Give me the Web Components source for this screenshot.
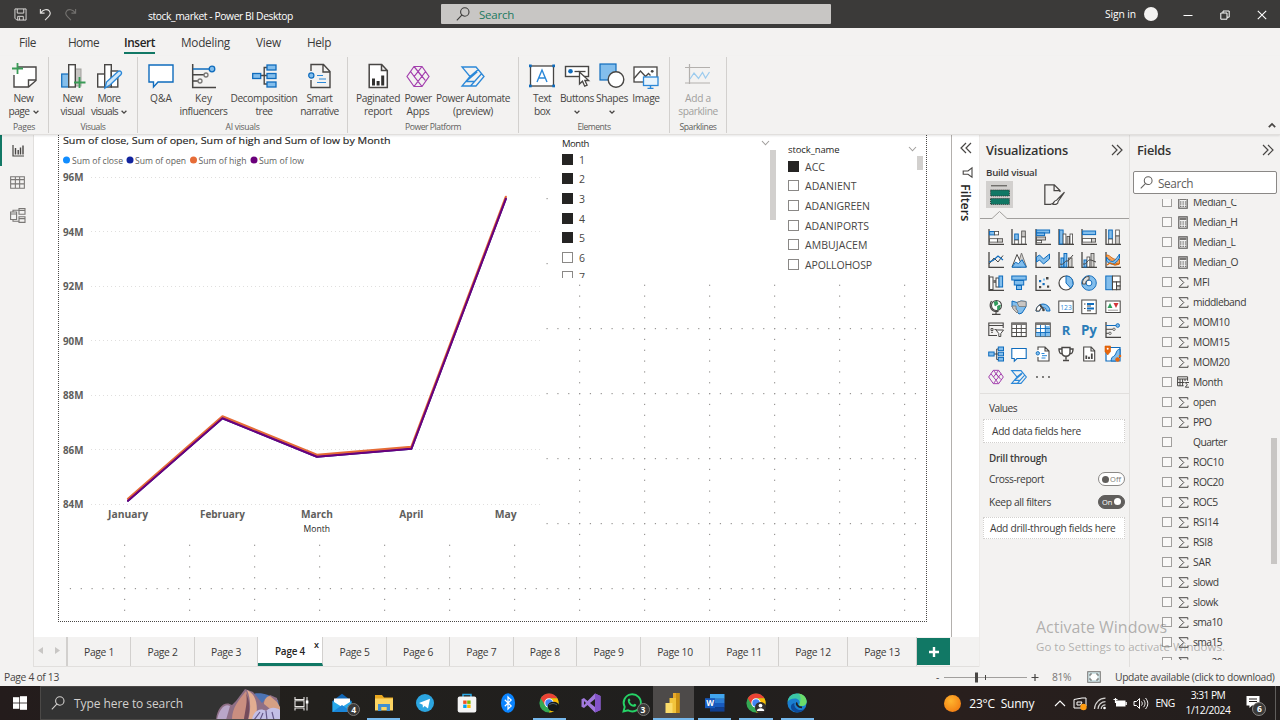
<!DOCTYPE html>
<html lang="en">
<head>
<meta charset="utf-8">
<title>stock_market - Power BI Desktop</title>
<style>
html,body{margin:0;width:1280px;height:720px;overflow:hidden;background:#f3f2f1}
body{font-family:"Open Sans","Noto Sans",sans-serif;color:#3b3a39}
</style>
</head>
<body>
<pbi-app></pbi-app>
<script>
const K='#484644', B='#2b88d8', L='#83beec', G='#a19f9d', D='#0f6cbd';
const s=(d,c=K,w=1.4,f='none')=>`<path d="${d}" stroke="${c}" stroke-width="${w}" fill="${f}"/>`;
const r=(x,y,w,h,f,c='none',sw=1)=>`<rect x="${x}" y="${y}" width="${w}" height="${h}" fill="${f}" stroke="${c}" stroke-width="${sw}"/>`;
const c=(x,y,q,f,st='none',w=1)=>`<circle cx="${x}" cy="${y}" r="${q}" fill="${f}" stroke="${st}" stroke-width="${w}"/>`;
const axis=s('M1 0V15.3H16',K,1.3);
const lozenge='M8 1.5h8l7 10-7 10H8L1 11.5z M8 1.5l11.3 13.8 M16 1.5L12 6.7 M12 6.7l3.8 4.8L12 16.300 8.200 11.5z M15.800 11.5l3.700-4.800 M12 16.300l-4 5.200 M12 16.300l4 5.200 M8.200 11.5L4.600 6.700';
const powerApps=s(lozenge,'#a33fae',1.2);
const powerAuto=s('M1 2h14l8 9.500-8 9.500H1l8-9.500z M9 11.5l8.200-7 M5 16.500L13.500 9.200l2.800-2.500 M9.500 21l11-12.200 M5 16.500h8.500','#2b88d8',1.3);
const chromeArt=`<circle cx="10" cy="10" r="9.6" fill="#34a853"/><path d="M10 .4A9.6 9.6 0 0 1 18.4 5.3L10 5.3 6 12.3 1.7 5.2A9.6 9.6 0 0 1 10 .4z" fill="#ea4335"/><path d="M18.4 5.3A9.6 9.6 0 0 1 10 19.6L14 12.4 12 5.3z" fill="#fbbc05"/><circle cx="10" cy="10" r="4.7" fill="#fff"/><circle cx="10" cy="10" r="3.7" fill="#4285f4"/>`;
const ICONS={
 save:[14,14,s('M1 1h12v12H3l-2-2z M3.5 1v4.5h7V1 M4 13V9h6v4 M6 10v3','#e1dfdd',1)],
 undo:[14,14,s('M1.5 1v4.5H6 M1.8 5.2C4.5 1.6 9 .8 11 3.2s1 4.6-1 6.3L6.5 13','#e1dfdd',1.2)],
 redo:[14,14,s('M12.5 1v4.5H8 M12.2 5.2C9.5 1.6 5 .8 3 3.2s-1 4.6 1 6.3L7.5 13','#72706e',1.2)],
 search:[14,14,c(8.8,5,4.2,'none','currentColor',1.1)+s('M5.8 8.2L.8 13.3','currentColor',1.1)],
 min:[10,10,s('M.5 5.5h9','#fff',1)],
 restore:[10,10,s('M.8 3h6.2v6.2H.8z M3 3V1h6.2v6.2H7','#fff',1)],
 close:[10,10,s('M.8.8l8.4 8.4M9.2.8L.8 9.2','#fff',1.1)],
 chev:[6,4,s('M.6.8L3 3.2 5.4.8',K,1.3)],
 chevup:[8,5,s('M.8 4.2L4 1l3.2 3.2',K,1.7)],
 chevg:[8,6,s('M.5 1L4 4.8 7.5 1',G,1.1)],
 dbl:[12,12,s('M1 1l5 5-5 5M6 1l5 5-5 5',K,1.2)],
 dbll:[12,12,s('M6 1L1 6l5 5M11 1L6 6l5 5',K,1.2)],
 newpage:[26,26,s('M7 4h18v13.5L17.5 24H3V12',K,1.4,'#fff')+s('M25 17h-7.5v7',K,1.4)+s('M6.5 0v11M1 5.5h11','#3a9b57',1.8)],
 newvisual:[26,26,r(15,6,6,17,'#c8c6c4',G)+r(1.7,11,7,13,L,D,1.2)+r(8.7,1.7,6.6,22.3,'#fff',K,1.4)+s('M19.5 14v11M14 19.5h11.5','#3a9b57',1.8)],
 morevisual:[26,26,r(1.7,11,7,13,'#fff',K,1.4)+r(8.7,1.7,6.6,22.3,'#fff',K,1.4)+r(15.3,8,6.5,16,'#fff',K,1.4)+s('M9 25l1.5-6L22 8.5c2.5-1.6 4.6 1 3 3L14 22z',B,1.4,'#cfe6f8')],
 qa:[26,26,s('M1 2h24v17H10L5.5 24v-5H1z',D,1.4,'#fff')],
 key:[26,26,s('M1.7 1v23.5H25',K,1.5)+s('M2 6h17',D,1.5)+s('M2 11.8h12M2 18h6',K,1.4)+c(21,6,2.8,L,D,1.3)+c(15,12,2,'#f3f2f1','#797775',1.3)+c(9,18,2,'#f3f2f1','#797775',1.3)],
 decomp:[26,26,s('M9 12.5h7M16 4.5h-2.8v16.5H16',K,1.4)+r(1.7,10.5,8,5,L,D,1.3)+r(16,2,9,5,L,D,1.3)+r(16,10.5,9,5,L,D,1.3)+r(16,19,9,5,L,D,1.3)],
 smart:[26,26,s('M4 8V1.5h12.5l6.5 7V24.5H4V17 M16 1.5v7.5h7',K,1.4)+c(4.3,12.5,2.6,L,D,1.2)+s('M10 12.5h6M12 16h7M10 19.5h9',B,1.2)],
 report:[26,26,s('M4.2 1.5h12.5l5.6 6V24.5H4.2z M16.5 1.5v6h6',K,1.5,'#fff')+r(7,15.5,3,7,'#323130')+r(11.6,18,3,4.5,'#323130')+r(16.2,12.5,3,10,'#323130')],
 apps:[24,23,powerApps], automate:[24,23,powerAuto],
 textbox:[26,26,r(1.5,3,23,20,'#fff',K,1.3)+s('M8 19L13 7l5 12M10 15h6',B,1.4)+[[0,1.5],[23.3,1.5],[0,21.6],[23.3,21.6]].map(p=>r(p[0],p[1],2.7,2.7,D)).join('')],
 buttons:[26,26,r(1.5,3.5,23,10,'#fff',K,1.4)+c(6.5,8.3,2.3,D)+s('M10.5 8.5h11',K,1.3)+s('M15.5 9v12l3-2.8 2.2 5 2.4-1-2.2-4.7h3.8z',K,1.3,'#fff')],
 shapes:[26,26,r(1,1,16,16,L,D,1.2)+c(17,16.5,7.8,'#fff',K,1.4)],
 image:[26,26,r(1,4,23,15,'#fff',K,1.3)+s('M1 15.5L7.5 8l5 5.5 3-3 2 2',K,1.3)+c(19.2,8.3,1.4,K)+r(10.5,14,14.5,8.5,'#e8f4fd',B,1.3)+s('M17.5 22.5v2.5M14.5 25.4h6',B,1.4)],
 spark:[26,26,s('M4.5 1v20M0 4.5h25M0 20h25','#b3b0ad',1.2)+s('M5 16l4-6 4.5 5.5 4-6 3 5.5 4-6','#9ccbee',1.2)],
 railchart:[12,12,s('M1 0v11h11',K,1.2)+s('M3.5 3v6.5M6.2 5v4.5M8.5 2.5v7M11 .5v9',K,1.4)],
 railtable:[14,12,s('M.6.6h12.8v10.8H.6z M.6 3.3h12.8M.6 7.3h12.8M5 .6v10.8M9 .6v10.8','#797775',1)],
 railmodel:[16,15,s('M.6 4h6v7.5h-6z M.6 6h6 M9 .6h6v5.7H9z M9 2.5h6 M9 8.7h6v5.7H9z M9 10.6h6 M3 4V2.3h5.5 M3 11.5v1.8h5.5','#797775',1.1)],
 funnel:[11,11,s('M10 .8v9.4L6 7.2H1.2V4H6z',K,1.1)],
 build:[20,20,s('M1 .8h16',K,1)+`<rect x=".6" y="5" width="18.8" height="6" fill="#117865" stroke="#333" stroke-dasharray="1 1"/><rect x=".6" y="13.4" width="18.8" height="6" fill="#117865" stroke="#333" stroke-dasharray="1 1"/>`],
 format:[20,20,s('M7 19.3H.8V.8h9l5.4 5.4v1.5 M9.6.8v5.6h5.6',K,1.2)+s('M19.5 7.8L12 15.5c-3 .3-2 2.5-4.2 3.4 3 1.2 5.8.2 5.6-2.2z',K,1.1,'#fff')],
 sigma:[11,11,s('M9.8 2.6V.7H1L5.8 5.5 1 10.3h9V8.500',K,1)],
 calc:[10,13,r(.8,.8,8.4,11.4,'#fff','#605e5c',1.2)+r(1.5,1.5,7,2.6,'#797775')+s('M2 6h1.5M4.4 6h1.5M6.8 6h1.5M2 8h1.5M4.4 8h1.5M6.8 8h1.5M2 10.2h1.5M4.4 10.2h1.5M6.8 10.2h1.5',K,1.1)],
 calsum:[13,12,s('M.6.8h10v4M.6.8v9h6M.6 3h10M3 3v7M5.6 3v7M8 3v2M.6 6.5h7',K,1)+s('M12 6.5H8.3l2 2.3-2 2.4H12',K,1)],
 none:[1,1,''],
 fit:[14,12,r(.7,.7,12.6,10.6,'#cfe3e6','#797775',1)+r(3.5,3,7,6,'#fff')+s('M3 5V3h2M9 3h2v2M11 7v2H9M5 9H3V7','#605e5c',.9)],
 // visual gallery
 v0:[16,16,axis+r(1.6,2.5,5,3.4,L,D)+r(6.6,2.5,4,3.4,'#fff',K,.8)+r(1.6,9.7,8,3.4,'#fff',K,.8)+r(9.6,9.7,5,3.4,'#d2d0ce',K,.8)],
 v1:[16,16,axis+r(3.7,5,3.6,6,L,D)+r(3.7,11,3.6,4,'#fff',K,.8)+r(10.7,2,3.6,6,'#c8c6c4',K,.8)+r(10.7,8,3.6,7,'#fff',K,.8)],
 v2:[16,16,axis+r(1.6,1,13,3,L,D)+r(1.6,4,8,2.6,L,D)+r(1.6,8,9,3,'#d2d0ce',K,.8)+r(1.6,11.4,5,2.4,'#fff',K,.8)],
 v3:[16,16,axis+r(1.6,1,3.5,14,L,D)+r(5.1,5,2.8,10,'#fff',K,.8)+r(9,7.5,2.6,7.5,'#c8c6c4',K,.8)+r(12,5,2.6,10,'#fff',K,.8)],
 v4:[16,16,axis+r(1.6,2,13,3.6,L,D)+r(1.6,9.5,9,3.6,'#fff',K,.8)+r(10.6,9.5,4,3.6,'#d2d0ce',K,.8)],
 v5:[16,16,axis+r(3.7,1,3.6,9,L,D)+r(3.7,10,3.6,5,'#fff',K,.8)+r(10.7,1,3.6,6,'#fff',K,.8)+r(10.7,7,3.6,8,'#d2d0ce',K,.8)],
 v6:[16,16,axis+s('M1 12l5-6 4 4 5-6.5',K,1)+s('M1 10l4-1.5 5-4.5 5 4',D,1.2)],
 v7:[16,16,s('M6 15L10.5 1 15.5 15z','#797775',1,'#d2d0ce')+s('M1 15L6 2.5 10 11v4z',K,1,'#fff')+s('M1 15.2l3.5-5 3 1.5 3.5-4 4.3 7.5z',D,1,L)],
 v8:[16,16,axis+s('M1.5 5l3-2 4 4 6-5v5l-6 5-4-4-3 2z',D,1,L)],
 v9:[16,16,axis+r(3,6,2.8,9,L,D)+r(6,1.5,2.8,13.5,L,D)+r(10.5,6,3.5,9,'#d2d0ce',K,.8)+s('M2 12c4 2 4-4 8-3l5-6',K,1)],
 v10:[16,16,axis+r(3,8,2.8,7,L,D)+r(6,5,2.8,10,'#fff',K,.8)+r(10,1.5,3,13.5,'#d2d0ce',K,.8)+s('M2 12c4 1 4-5 8-4l5 2',K,1)],
 v11:[16,16,axis+s('M1.5 3c5 0 5 6 13 4v5c-7 0-7-5-13-5z','#d06a14',1,'#f4a460')+s('M1.5 5c4 6 7 7 13-3v4c-5 8-9 7-13 3z',D,1,L)+s('M2 13l3-2 5 2 4-1','#d06a14',1.4)],
 v12:[16,16,axis+r(1.6,2,3.4,12.5,'#fff',K,1)+r(5,5,3,3,'#797775')+r(8,3,3,9,'#fff',K,1)+r(11,1,3.6,11,L,D)],
 v13:[16,16,r(.8,1,14.4,4,L,D)+r(3.3,5.5,9.4,4.5,L,D)+r(5.5,10.5,5,4,L,D)],
 v14:[16,16,axis+r(11,2,2.5,2.5,K)+r(4,5,2.2,2.2,D)+r(7.5,8,2.2,2.2,D)+r(4,11,2.2,2.2,K)+r(12,10.5,2.2,2.2,K)+r(8,3.5,2,2,'#83beec')],
 v15:[16,16,c(8,8,7,'#fff',K,1.2)+s('M8 8V1a7 7 0 0 1 4.8 12.2z',D,1,L)],
 v16:[16,16,c(8,8,5,'none',L,4.2)+c(8,8,7.3,'none',D,1)+c(8,8,2.9,'#fff',D,1)+s('M8 1.3A6.7 6.7 0 0 0 1.5 9h3.2A3.4 3.4 0 0 1 8 4.8z',K,.9,'#e1dfdd')],
 v17:[16,16,r(.8,1,6.5,13.7,L,D)+r(7.5,1,7.7,6,'#fff',K)+r(7.5,7,4,7.7,'#fff',K)+r(11.5,7,3.7,4,'#fff',K)+r(11.5,11,3.7,3.7,'#d2d0ce',K)],
 v18:[16,16,c(8.5,6.5,5,'#fff',K,1.1)+s('M6 3l3-1 1 3-3 2zM9.5 7l3-1-1 4-2 1z','#107c41',.5,'#2f9e5b')+s('M3.5 2C0 8 4 13.5 10.5 12.5M8 13v2M4 15.3h8.5',K,1.2)],
 v19:[16,16,s('M1 2l5 1.5L10 2l5 .5v5l-2 3.500-2 3-3 1-3-3.500v-2L1 8z',D,1,L)+s('M6 3.5L10 2l5 .5v5H8zM1 7h4v3l2 2-1 2-4-4z','#797775',.8,'#c8c6c4')],
 v20:[16,16,s('M1 12a7 7 0 0 1 14 0h-3.5a3.5 3.5 0 0 0-7 0z',D,1,L)+s('M1 12a7 7 0 0 1 3.500-6l2 3a3.500 3.500 0 0 0-2 3z',K,1,'#fff')+s('M5 5.500l3.500 5',K,1.4)+c(8.5,11,1.3,K)],
 v21:[16,16,r(.8,2,14.4,11.5,'#fff',K,1)+'<text x="2.200" y="10.800" font-size="8" fill="#2b88d8" textLength="11.600" lengthAdjust="spacingAndGlyphs">123</text>'],
 v22:[16,16,r(.8,1,14.4,13.7,'#fff',K,1)+s('M6 5h7M6 9.5h7',D,1.8)+s('M3 5h1.5M3 9.5h1.5M6 7h4M6 11.8h4',K,1)],
 v23:[16,16,r(.8,2,14.4,11.5,'#fff',K,1)+s('M2.5 9L5 4l2.4 5z','none',0,'#2f9e5b')+s('M8.5 4h5L11 9z','none',0,'#d13438')+s('M3 11.200h10',G,1)],
 v24:[16,16,s('M9 13.5H.8V1h14.4v5M.8 3.5h14.4',K,1.1)+s('M3 6.5h2v2H3zM3 10.3h2M6.5 7.5h2',K,.9)+s('M8 8h7.5l-2.7 3.5v3h-2v-3z',K,1,'#fff')],
 v25:[16,16,r(.8,1,14.4,13.5,'#fff',K,1.1)+r(1,1,14,2,'#797775')+s('M1 6.5h14M1 10.5h14M5.5 3v11.5M10.3 3v11.5',K,.9)],
 v26:[16,16,r(.8,1,14.4,13.5,'#fff',K,1.1)+r(10,4,5,10.4,L)+r(1,10,9,4.4,L)+r(1,1,14,2,'#797775')+s('M1 6.5h14M1 10.5h14M5.5 3v11.5M10.3 3v11.5',D,.9)],
 v27:[16,16,'<text x="8" y="13" font-size="13" font-weight="700" fill="#2b7cb8" text-anchor="middle">R</text>'],
 v28:[16,16,'<text x="0" y="12.500" font-size="13.500" font-weight="700" fill="#2b7cb8" textLength="16">Py</text>'],
 v29:[16,16,s('M1 0V15.3H16',K,1.3)+s('M1 3.5h10',D,1)+s('M1 7.3h7M1 11.3h3',K,1)+c(12.7,3.5,1.8,L,D,1)+c(9,7.3,1.2,'#fff',K,.8)+c(5,11.3,1.2,'#fff',K,.8)],
 v30:[16,16,s('M6 8h4M10.5 3H8.7v10.5h2',K,1)+r(.7,6,5.4,4,L,D)+r(10.3,1,5.2,3.6,L,D)+r(10.3,6.2,5.2,3.6,L,D)+r(10.3,11.4,5.2,3.6,L,D)],
 v31:[16,16,s('M.8 2.5h14.4v10H6l-2.7 2.7v-2.7H.8z',D,1.1,'#fff')],
 v32:[16,16,s('M3 4V1h7l4 4v10H3v-4M10 1v4h4',K,1.1,'#fff')+c(2.8,7.3,1.7,L,D,.9)+s('M6.5 7.5h3M7 9.7h5M6.5 12h4',B,1)],
 v33:[16,16,s('M4 1.5h8v5c0 5-8 5-8 0z M4 3H1c0 4 1 5 3.5 5M12 3h3c0 4-1 5-3.5 5M8 10.5v3M5 14.5h6',K,1.4,'#fff')],
 v34:[16,16,s('M2.7 1h7.5l3.5 3.6V15H2.7z M10 1v4h3.5',K,1.1,'#fff')+s('M5.3 9.5V13M8 10.8V13M10.8 7.5V13',K,1.8)],
 v35:[16,16,s('M1 1.5h14V15H1z',D,1.2,'#fff')+s('M6 15c1-6 2-3 4-6s1-5 5-6v8l-4 4z',D,1,L)+s('M0 0h5.500v5.500L2.700 9 0 5.500z','#d35b00',.6,'#e8660c')+c(2.700,2.800,1,'#fff')+c(12.5,13.500,2.2,'#e8660c')+c(15,10,1.3,'#e8660c')],
 v36:[24,23,s(lozenge,'#a33fae',1.5)],v37:[24,23,powerAuto.replace('1.3"','1.7"')],
 v38:[16,16,c(2,8,.9,K)+c(8,8,.9,K)+c(14,8,.9,K)],
 // taskbar
 win:[14,14,r(0,1.2,6.3,5.4,'#fff')+r(7,.2,7,6.4,'#fff')+r(0,7.4,6.3,5.4,'#fff')+r(7,7.4,7,6.4,'#fff')],
 task:[15,15,s('M1 1v2.5h9V1M1 14.5V12h9v2.5M1 4.8h9v5.7H1zM13 1v13.5','#e8e6e4',1.1)+r(11.8,4.5,2.6,3,'#fff')],
 mail:[20,20,s('M.5 8L10 .8 19.5 8v11H.5z','none',0,'#1066b5')+s('M2 5.5h16v7L10 16 2 12z','none',0,'#fff')+s('M.5 8l9.5 6L19.5 8v11H.5z','none',0,'#29a9ea')+s('M.5 19L10 12l9.5 7z','none',0,'#1a86d9')],
 explorer:[20,20,s('M1 2h7l2 2.5h9V17H1z','none',0,'#e9a820')+r(1,5.5,18,12,'#fcd462')+s('M4 18v-7h12v7h-3.3v-4H7.3v4z','none',0,'#3f8fd2')],
 telegram:[20,20,c(10,10,9,'#2ca5e0')+s('M4 10l11-4.3-2 9.8-3.3-2.4-1.8 1.7-.2-3z','none',0,'#fff')],
 store:[20,20,s('M6 4V1.5h8V4','#2aa9e8',1.5)+`<rect x=".7" y="3.5" width="18.6" height="16" rx="2" fill="#f4f4f4"/>`+r(6.2,7.5,3.4,3.4,'#f25022')+r(10.2,7.5,3.4,3.4,'#7fba00')+r(6.2,11.6,3.4,3.4,'#00a4ef')+r(10.2,11.6,3.4,3.4,'#ffb900')],
 bt:[20,20,'<ellipse cx="10" cy="10" rx="7" ry="9.8" fill="#0a84ff"/>'+s('M6.8 6.8l6.4 6.2-3.2 3V4l3.2 3-6.4 6.2','#fff',1.2)],
 chromeA:[20,20,chromeArt+'<ellipse cx="14.5" cy="13.5" rx="5.8" ry="4.8" fill="#15191b"/>'+s('M10 12c3-2 5-2 8 0','#53636a',1)],
 chromeB:[20,20,chromeArt+c(14.5,14.5,5.5,'#34302f')+c(14.5,12.6,1.9,'#fff')+s('M10.8 18c0-3.8 7.4-3.8 7.4 0z','none',0,'#fff')],
 vs:[20,20,s('M14 .5l5.5 2.5v14L14 19.5 6.5 12 3 15 .5 13.8V6.2L3 5l3.5 3z M14 6l-5 4 5 4z M3 8v4l2-2z','none',0,'#a179dc').replace('/>',' fill-rule="evenodd"/>')+s('M14 .5l5.5 2.5v14L14 19.5z','none',0,'#8252c7')],
 wa:[20,20,s('M1.5 18.5l1.2-4.6A8.6 8.6 0 1 1 6 17.3z','#25d366',1.9)+s('M6 6.3c1-1.5 1.8-1 2.4 1l-.8 1.3c.8 1.6 1.8 2.6 3.6 3.2l1.2-1c2.4.7 2.4 1.5 1 2.7C9.500 15.300 4.800 10 6 6.300z','none',0,'#25d366')],
 pbi:[20,20,r(10,0,6.5,20,'#e8a92b')+r(6.5,5,6.5,15,'#f2c43b')+r(2.5,10,7,10,'#fbdc6a')+s('M13 5h0v15h3.500V0H13z','none',0,'#c98f14')],
 word:[20,20,r(5,1,14.5,4.8,'#41a5ee')+r(5,5.700,14.5,4.500,'#2b7cd3')+r(5,10,14.5,4.500,'#185abd')+r(5,14.300,14.5,4.300,'#103f91')+r(0,5.2,10,10,'#185abd')+'<text x="5" y="13.200" font-size="8" font-weight="700" fill="#fff" text-anchor="middle">W</text>'],
 edge:[20,20,c(10,10,9.6,'#1b7fd0')+s('M.5 9C1 3.500 5 .4 10 .4c6 0 9.600 4 9.600 8.100 0 3-2.500 4.600-5 4.600-2 0-3-.8-2-2C13.500 8 11 5.600 8 5.600 4.500 5.600 1.500 7 .5 9z','none',0,'#3cc7a5')+s('M11 .5c5 .3 8.500 4 8.600 8 0 3-2.500 4.600-5 4.600-2 0-3-.8-2-2C13.500 8 15 3 11 .5z','none',0,'#6bdc6a')+s('M7.500 10c-1 4 2.500 7.500 7 7 1.500-.2 2.500-.8 3.500-1.500-3 4-8 5-12 2.500-3-2.500-3-7 1.500-8z','none',0,'#0c4a9a')+s('M10 9.500c-1 1.500.5 4.800 5 4.800','#20201f',1.800)],
 chevtray:[12,8,s('M1 7l5-5 5 5','#fff',1.1)],
 onedr:[14,14,s('M1 3.500l8-1.500h4v8M1 3.500v8.500h8M4 6h5l-1.500 3H4z','#fff',1)+c(10.500,11,3.200,'#ff9c12')],
 wifi:[14,13,s('M1.500 12A11 11 0 0 1 12.500 1.200M5 12a7.500 7.500 0 0 1 7.500-7.400M8.200 12a4.300 4.300 0 0 1 4.300-4.200','#d2d0ce',1.200)+c(11.500,11,1.300,'#fff')],
 batt:[14,10,r(3,2.500,9.500,6,'#fff')+r(12.500,4,1.300,3,'#fff')+s('M.5 1.500h4M2.500 0v5','#fff',1.200)],
 vol:[15,13,s('M1 4.500h2.500L6.500 1.500v10L3.500 8.500H1z M8.500 4.500c1 1.300 1 2.700 0 4M10.500 2.800c2 2.300 2 5.100 0 7.400M12.500 1c3 3.500 3 7.500 0 11','#fff',1)],
 note:[14,14,s('M.5 1h13v9.500H6L3.500 13v-2.500h-3z','none',0,'#fff')+s('M3 4h8M3 6.500h8','#221e1d',1)]
};
function define(tag,css,html,after){
 customElements.define(tag,class extends HTMLElement{
  connectedCallback(){
   if(this.shadowRoot)return;
   const root=this.attachShadow({mode:'open'});
   root.innerHTML='<style>*{box-sizing:border-box}'+css+'</style>'+(typeof html==='function'?html(this):html);
   if(after)after(this,root);
  }
 });
}
const ic=(n,w,h,x='')=>`<pbi-icon name="${n}" w="${w}" h="${h||w}" ${x}></pbi-icon>`;
const t=(txt,w,x='')=>`<fit-text w="${w}" ${x}>${txt}</fit-text>`;

define('pbi-icon',':host{display:inline-block;flex:none;line-height:0}svg{display:block;overflow:visible;font-family:"Open Sans",sans-serif}',e=>{
 const i=ICONS[e.getAttribute('name')];
 return `<svg width="${e.getAttribute('w')}" height="${e.getAttribute('h')}" viewBox="0 0 ${i[0]} ${i[1]}">${i[2]}</svg>`;
});
// One-line label whose tracking is tuned so that it occupies a given width.
define('fit-text',':host{display:inline-block;flex:none;white-space:pre}','<slot></slot>',e=>{
 const w=+e.getAttribute('w'), range=document.createRange();
 range.selectNodeContents(e);
 const n=range.getBoundingClientRect().width, len=e.textContent.length;
 if(w&&n){const sp=(w-n)/len;e.style.letterSpacing=sp.toFixed(3)+'px';e.style.width=w+'px';}
});

define('title-bar',`:host{display:flex;align-items:center;height:28px;background:#3b3a39;color:#fff;font-size:10.3px}
.q{display:flex;gap:12px;width:148px;padding-left:14px;align-items:center}
.s{display:flex;align-items:center;height:20px;width:390px;margin-left:148px;background:#c8c6c4;border-radius:1px;padding-left:15px;gap:9px;color:#3b3a39;font-size:11.500px}
.s fit-text{color:#217a60}.ttl{padding-top:4px}
.r{display:flex;align-items:center;flex:1;padding-left:274px}.av{width:14px;height:14px;border-radius:50%;background:#f3f2f1;margin:0 26px 0 8px}
.w{display:flex;gap:27px;padding-top:2px;align-items:center;margin-left:-1px}`,
`<div class="q">${ic('save',13)}${ic('undo',13)}${ic('redo',13)}</div>${t('stock_market - Power BI Desktop',145,'class="ttl"')}
<div class="s">${ic('search',14)}${t('Search',35)}</div>
<div class="r">${t('Sign in',31)}<span class="av"></span><div class="w">${ic('min',10)}${ic('restore',10)}${ic('close',10)}</div></div>`);

define('ribbon-tabs',`:host{display:flex;height:28px;font-size:11.800px;background:#f3f2f1}
span{height:26px;line-height:28px;border-bottom:2px solid transparent}
.on{font-weight:600;color:#252423;border-color:#117865}`,
[['File',17,19],['Home',31,32],['Insert',31,25],['Modeling',49,26],['View',25,26],['Help',24,26]].map(a=>`<span class="${a[0]=='Insert'?'on':''}" style="margin-left:${a[2]}px">${t(a[0],a[1])}</span>`).join(''));

define('ribbon-button',`:host{display:flex;flex-direction:column;align-items:center;flex:none;font-size:10.200px;line-height:13px;color:#484644}
.i{height:28px;display:flex;align-items:center;margin-bottom:2px}.l{display:flex;align-items:center;gap:3px;height:13px}:host([off]) .l{color:#a19f9d}`,
e=>{e.style.width=e.getAttribute('cell')+'px';
 const l=(k,kw)=>e.getAttribute(k)?t(e.getAttribute(k),e.getAttribute(kw)):'';
 const n=e.getAttribute('icon'),sm=n=='apps'||n=='automate';
 return `<div class="i">${ic(n,sm?24:26,sm?23:26)}</div><div class="l">${l('a','aw')}</div><div class="l">${l('b','bw')}${e.hasAttribute('menu')?ic('chev',6,4):''}</div>`});

define('ribbon-group',`:host{display:flex;flex-direction:column;flex:none;height:76px;margin-top:1px;border-right:1px solid #d2d0ce;padding-top:5px}
.b{display:flex;height:59px}.n{text-align:center;font-size:8.600px;line-height:12px;height:12px;color:#605e5c;margin-top:0}`,
e=>{e.style.width=e.getAttribute('size')+'px';return `<div class="b" style="padding-left:${e.getAttribute('pad')}px"><slot></slot></div><div class="n">${t(e.getAttribute('label'),e.getAttribute('lw'))}</div>`});

const rb=(icon,cell,a,aw,b='',bw='',x='')=>`<ribbon-button icon="${icon}" cell="${cell}" a="${a}" aw="${aw}" b="${b}" bw="${bw}" ${x}></ribbon-button>`;
const rg=(size,pad,label,lw,body)=>`<ribbon-group size="${size}" pad="${pad}" label="${label}" lw="${lw}">${body}</ribbon-group>`;
define('ribbon-bar',`:host{display:flex;height:79px;background:#f3f2f1;border-bottom:1px solid #e1dfdd;position:relative;z-index:2;box-shadow:0 1px 2px rgba(0,0,0,.1)}.up{margin:67px 4px 0 auto}`,
rg(49,4,'Pages',22,rb('newpage',39,'New',20,'page',21,'menu'))+
rg(89,6,'Visuals',25,rb('newvisual',35,'New',20,'visual',24)+rb('morevisual',38,'More',23,'visuals',27,'menu'))+
rg(210,4,'AI visuals',34,rb('qa',38,'Q&amp;A',22)+rb('key',47,'Key',17,'influencers',48)+rb('decomp',74,'Decomposition',67,'tree',17)+rb('smart',37,'Smart',26,'narrative',38.5))+
rg(171,6,'Power Platform',56,rb('report',48,'Paginated',44,'report',28)+rb('apps',32,'Power',27,'Apps',23)+rb('automate',78,'Power Automate',74,'(preview)',40))+
rg(151,5,'Elements',33,rb('textbox',36,'Text',18,'box',16)+rb('buttons',34,'Buttons',34,'','','menu')+rb('shapes',36,'Shapes',32,'','','menu')+rb('image',32,'Image',27.5))+
rg(57,8,'Sparklines',37,rb('spark',40,'Add a',26,'sparkline',39.5,'off'))+ic('chevup',8,5,'class="up"'));

define('view-rail',`:host{display:flex;flex-direction:column;width:34px;height:532px;border-right:1px solid #e1dfdd;background:#f3f2f1}
div{height:33px;display:flex;align-items:center;justify-content:center;border-left:2px solid transparent}.on{border-color:#117865;height:31px}`,
`<div class="on">${ic('railchart',12)}</div><div>${ic('railtable',15,13)}</div><div>${ic('railmodel',16,15)}</div>`);

define('line-chart',`:host{display:block;width:487px;height:406px;background:#fff}svg{display:block;font-family:"Open Sans","Noto Sans",sans-serif}`,()=>{
 const T=(x,y,w,txt,a='',fs=10)=>`<text x="${x}" y="${y}" textLength="${w}" lengthAdjust="spacingAndGlyphs" font-size="${fs}" ${a}>${txt}</text>`;
 let o='<svg width="487" height="406" viewBox="59 135 487 406">';
 o+=T(63,144.200,327.500,'Sum of close, Sum of open, Sum of high and Sum of low by Month','fill="#252423" font-weight="500" stroke="#252423" stroke-width=".15"',9.800);
 [['close',66.500,72,51,'#118dff'],['open',130,135,51,'#12239e'],['high',193.500,198.500,48,'#e66c37'],['low',254,259,45,'#6b007b']].forEach(a=>o+=c(a[1],160,3.500,a[4])+T(a[2],164,a[3],'Sum of '+a[0],'fill="#605e5c"',9.500));
 for(let i=0;i<7;i++){const y=177.500+i*54.450;o+=`<path d="M91 ${Math.floor(y)+.5}H543" stroke="#e0dfde" stroke-width="1" stroke-dasharray="1 3"/>`+T(63,y+3.800,20.500,(96-2*i)+'M','font-weight="700" fill="#605e5c"',9.800);}
 [['January',40],['February',45],['March',32],['April',24],['May',22]].forEach((m,i)=>o+=T(128+i*94.450-m[1]/2,517.500,m[1],m[0],'font-weight="700" fill="#605e5c"',10));
 o+=T(303.500,532,26.500,'Month','fill="#252423"',9);
 const P=(d,k,col)=>`<polyline points="128,${500+k} 222.450,${417.500+k} 316.900,${456+k} 411.350,${448+k} 505.800,${198+k}" fill="none" stroke="${col}" stroke-width="${d}" stroke-linejoin="round" stroke-linecap="round"/>`;
 return o+P(2,.8,'#12239e')+P(2.200,-1.200,'#e66c37')+P(2,.8,'#6b007b')+'</svg>';
});

define('slicer-list',`:host{display:block;overflow:hidden;background:#fff;color:#484644;font-size:10.500px}
header{display:flex;justify-content:space-between;align-items:center;height:14px;color:#252423;font-size:9.500px;padding-right:6px}
.b{display:flex;justify-content:space-between}.row{display:flex;align-items:center;height:19.600px;gap:6px}
i{width:11px;height:11px;border:1px solid #8a8886;background:#fff;flex:none;margin-bottom:1px}i.on{background:#252423;border-color:#252423}
.bar{width:6px;background:#d2d0ce}`,
e=>{const d=JSON.parse(e.getAttribute('data'));return `<header>${t(d.title,d.tw)}${ic('chevg',9,6)}</header><div class="b"><div style="margin-top:${d.top}px">${d.rows.map((q,i)=>`<div class="row"><i class="${i<d.on?'on':''}"></i>${t(q[0],q[1])}</div>`).join('')}</div><div class="bar" style="height:${d.bh}px;margin-top:${d.bt}px"></div></div>`});

const sl=(cls,d)=>`<slicer-list class="${cls}" data='${JSON.stringify(d)}'></slicer-list>`;
define('report-canvas',`:host{display:block;width:917px;height:502px;background:#fff;padding-left:24px;overflow:hidden}
.page{position:relative;width:869px;height:487px;overflow:hidden;border:1px dotted #4a4847;border-width:0 1px 1px}
.grid{position:absolute;inset:0}.mask{position:absolute;left:491px;top:0;width:376px;height:146px;background:#fff}
line-chart{position:absolute;left:0;top:0}.m{position:absolute;left:503px;top:1px;width:214px;height:142px}.s{position:absolute;left:729px;top:7px;width:135px;height:136px}`,
`<div class="page"><svg class="grid" width="869" height="487"><defs><pattern id="g" width="65" height="65" patternUnits="userSpaceOnUse" x="0" y="-2">${[0,1,2,3,4,5].map(i=>r(0,+(i*10.833).toFixed(2),1.2,1.2,'#979593')+r(+(i*10.833).toFixed(2),0,1.2,1.2,'#979593')).join('')}</pattern></defs><rect x="10" width="848" height="480" fill="url(#g)"/></svg><div class="mask"></div><line-chart></line-chart>`+
sl('m',{title:'Month',tw:27,top:0,on:5,bh:70,bt:0,rows:[1,2,3,4,5,6,7].map(x=>[''+x,5.5])})+
sl('s',{title:'stock_name',tw:51.5,top:1,on:1,bh:14,bt:0,rows:[['ACC',20],['ADANIENT',51.5],['ADANIGREEN',65],['ADANIPORTS',64],['AMBUJACEM',62.5],['APOLLOHOSP',67]]})+'</div>');

define('filters-strip',`:host{display:flex;flex-direction:column;align-items:center;width:28px;height:502px;background:#fff;border-left:1px solid #b3b0ad;padding-top:7px}
fit-text{writing-mode:vertical-rl;font-weight:600;font-size:12.500px;height:36px;width:auto!important;margin-top:6px;color:#252423}.f{margin:13px 0 0 3px}`,
`${ic('dbll',12)}${ic('funnel',11,11,'class="f"')}<fit-text>Filters</fit-text>`);

define('toggle-pill',`:host{display:flex;align-items:center;justify-content:space-between;width:27px;height:14px;border-radius:7px;border:1px solid #8a8886;background:#fff;font-size:7.500px;color:#797775;padding:0 3px}
i{width:7px;height:7px;border-radius:50%;background:#605e5c}:host([on]){background:#605e5c;border-color:#605e5c;color:#fff;flex-direction:row-reverse}:host([on]) i{background:#fff}`,'<i></i><slot></slot>');

define('viz-pane',`:host{display:block;width:151px;height:532px;background:#f3f2f1;border-left:1px solid #edebe9;border-right:1px solid #e1dfdd;font-size:10.200px;overflow:hidden}
header{display:flex;justify-content:space-between;align-items:center;height:30px;padding:0 6px 0 6px;font-size:12.800px;font-weight:600;color:#323130}
.bv{display:block;font-size:9.700px;font-weight:600;margin:0 0 0 6px;height:15px;line-height:15px}
.tabs{display:flex;align-items:center;height:29px;padding-left:6px}.tabs div{width:27px;height:27px;background:#d2d0ce;display:flex;align-items:center;justify-content:center}.tabs pbi-icon.f{margin-left:31px}
.line{display:block;margin-top:1px}.g{display:grid;grid-template-columns:repeat(6,23.350px);grid-auto-rows:23.400px;margin:6px 0 0 4.300px;height:167px}
.g pbi-icon{place-self:center}.sep{border-top:1px solid #e1dfdd;margin-top:1px}
.r{display:flex;justify-content:space-between;align-items:center;padding:0 4px 0 9px}
.well{width:142px;margin-left:3px;background:#fff;border:1px dotted #d2d0ce;display:flex;align-items:center}`,
`<header>${t('Visualizations',82)}${ic('dbl',12)}</header><div class="bv">${t('Build visual',51)}</div><div class="tabs"><div>${ic('build',20)}</div>${ic('format',21,21,'class="f"')}</div>
<svg class="line" width="150" height="9"><path d="M0 8.500H12L19.500 1.500 27 8.500H150" fill="none" stroke="#a19f9d"/></svg>
<div class="g">${Array.from({length:39},(_,i)=>ic('v'+i,16)).join('')}</div><div class="sep"></div>
<div class="r" style="height:25px;padding-top:2px">${t('Values',28)}</div><div class="well" style="height:24px;padding-left:8px">${t('Add data fields here',89)}</div>
<div class="r" style="height:30px;font-weight:600;font-size:9.900px">${t('Drill through',58)}</div><div class="r" style="height:12px">${t('Cross-report',55)}<toggle-pill>Off</toggle-pill></div>
<div class="r" style="height:33px">${t('Keep all filters',62)}<toggle-pill on>On</toggle-pill></div><div class="well" style="height:22px;padding-left:6px;margin-top:-1px">${t('Add drill-through fields here',125.500)}</div>`);

define('fields-pane',`:host{display:block;width:150px;height:532px;background:#f3f2f1;font-size:10.300px;overflow:hidden}
header{display:flex;justify-content:space-between;align-items:center;height:30px;padding:0 6px 0 7px;font-size:12.800px;font-weight:600;color:#323130}
.s{display:flex;align-items:center;gap:5px;width:144px;height:23px;margin:6px 0 5px 3px;background:#fff;border:1px solid #8a8886;border-radius:2px;padding-left:6px;font-size:11.800px;color:#605e5c}
.list{height:461px;overflow:hidden;display:flex;justify-content:space-between}.rows{margin-top:-7px}.row{display:flex;align-items:center;height:20px;padding-left:32px}
i{width:10px;height:10px;border:1px solid #a19f9d;background:#faf9f8;flex:none}.k{width:21px;display:flex;justify-content:center;padding-left:1px}
.bar{width:6px;height:126px;margin:239px 3px 0 0;background:#c8c6c4}`,
`<header>${t('Fields',34)}${ic('dbl',12)}</header><div class="s">${ic('search',13)}${t('Search',35)}</div><div class="list"><div class="rows">${
[['Median_C',43.5,'calc'],['Median_H',44.5,'calc'],['Median_L',42.5,'calc'],['Median_O',45,'calc'],['MFI',16.5],['middleband',53],['MOM10',36.5],['MOM15',36.5],['MOM20',36.5],['Month',29.5,'calsum'],['open',23],['PPO',18.5],['Quarter',34,'none'],['ROC10',30.5],['ROC20',30.500],['ROC5',24.500],['RSI14',25.500],['RSI8',19.500],['SAR',18],['slowd',25.500],['slowk',25],['sma10',29],['sma15',29],['sma20',29]].map(f=>{const k=f[2]||'sigma';return `<div class="row"><i></i><span class="k">${ic(k,ICONS[k][0],ICONS[k][1])}</span>${t(f[0],f[1])}</div>`}).join('')}</div><div class="bar"></div></div>`);

define('page-tabs',`:host{display:flex;width:945px;height:30px;background:#f3f2f1;font-size:10.300px;border-bottom:1px solid #e1dfdd}
.nav{width:34px;display:flex;align-items:center;justify-content:space-between;padding:0 6px 2px 4px;border-right:2px solid #d2d0ce}
.p{display:flex;justify-content:center;align-items:center;border-right:1px solid #d2d0ce;position:relative}.on{background:#fff;border-bottom:3px solid #117865;color:#252423;font-weight:600;padding-top:2px;height:29px;font-size:9.900px}
.x{position:absolute;right:3px;top:1px;font-size:9px;line-height:14px}.add{width:33px;height:27px;margin:1px 0 0;background:#117865;display:flex;align-items:center;justify-content:center}`,
`<div class="nav"><svg width="5" height="7"><path d="M5 0v7L0 3.500z" fill="#c8c6c4"/></svg><svg width="5" height="7"><path d="M0 0v7l5-3.500z" fill="#c8c6c4"/></svg></div>`+
[63,64,63,65,64,63,63.500,63.500,64,69,69,69,69].map((w,i)=>`<div class="p ${i==3?'on':''}" style="width:${w}px">${t('Page '+(i+1),i>8?35.500:30)}${i==3?'<span class="x">x</span>':''}</div>`).join('')+
`<div class="add"><svg width="10" height="10"><path d="M5 0v10M0 5h10" stroke="#fff" stroke-width="2.400"/></svg></div>`);

define('status-bar',`:host{display:flex;align-items:center;height:19px;background:#f3f2f1;font-size:10.300px;padding-left:4px;color:#484644}
.z{display:flex;align-items:center;margin-left:877px}.f{margin:0 14px 0 16px}`,
`${t('Page 4 of 13',55)}<div class="z">${t('-',4)}<svg width="100" height="12"><path d="M4 6.500h83" stroke="#a19f9d"/><path d="M36.500 1.500v10" stroke="#484644" stroke-width="3"/><path d="M45.500 4v5" stroke="#484644"/><path d="M95 3v7M91.500 6.500h7" stroke="#484644" stroke-width="1.200"/></svg></div><span style="width:12px"></span>${t('81%',19,'style="color:#797775"')}${ic('fit',14,12,'class="f"')}${t('Update available (click to download)',159.500)}`);

define('task-icon',`:host{display:flex;flex:none;width:41.350px;height:34px;align-items:center;justify-content:center;position:relative}
:host([run])::after{content:"";position:absolute;left:4px;right:4px;bottom:0;height:2px;background:#76b9ed}:host([sel]){background:#4d4a49}:host([sel])::after{left:0!important;right:0!important}
b{position:absolute;right:3px;top:17px;width:13px;height:13px;border-radius:50%;background:#3b3a39;border:1px solid #797775;color:#fff;font-size:8.500px;line-height:11px;text-align:center}`,
e=>ic(e.getAttribute('name'),e.getAttribute('name')=='task'?15:20)+(e.hasAttribute('n')?`<b>${e.getAttribute('n')}</b>`:''));

define('task-bar',`:host{display:flex;height:34px;background:linear-gradient(90deg,#241c1c 0,#22201d 24%,#201f1e 55%,#291f1d 75%,#221e1d 100%);color:#fff;font-size:11px;align-items:center}
.w{width:40px;display:flex;justify-content:center}.s{width:240px;height:34px;background:#333;border:1px solid #4b4947;border-right:0;display:flex;align-items:center;padding-left:10px;gap:9px;font-size:12px;color:#d2d0ce;overflow:hidden}
.s .art{margin-left:auto;display:block}.icons{display:flex;width:537.300px;margin-left:1px}.wx{display:flex;align-items:center;margin-left:126px;gap:8px;font-size:12px}.sun{width:17px;height:17px;border-radius:50%;background:radial-gradient(circle at 40% 35%,#ffb52e,#ef6f0c)}
.tray{display:flex;align-items:center;margin-left:20px;gap:6.300px}.clock{display:flex;flex-direction:column;align-items:center;margin-left:11px;line-height:15px;font-size:10.300px}.n{position:relative;margin-left:16px}.n b{position:absolute;left:6px;top:7px;width:14px;height:14px;border-radius:50%;background:#3b3a39;border:1px solid #8a8886;font-size:8.500px;line-height:12px;text-align:center}.end{width:1px;height:34px;background:#605e5c;margin-left:15px}`,
`<div class="w">${ic('win',14)}</div><div class="s">${ic('search',14)}${t('Type here to search',109)}
<svg class="art" width="64" height="32" viewBox="216 687 64 32"><path d="M238 706c4-9 16-16 30-11l10 5 2 12h-42z" fill="#4d74b4"/><path d="M216 720c1-13 9-20 16-15l4-4 9-12 8 3 9 11 8-8 7 3 3 22z" fill="#8e6f86"/><path d="M217 720c2-11 8-17 13-14l-4 14z" fill="#b9a6c8"/><path d="M232 720c0-13 7-20 14-29 4 9 0 20-2 29z" fill="#c98e80"/><path d="M247 690c10 5 11 16 9 28l-8 2c3-9 3-21-1-30z" fill="#e3ad91"/><path d="M246 693c2 8-1 18-2 26h4c2-9 2-18-2-26z" fill="#744b5b"/><path d="M264 704c0-5 3-8 6-8l7 6 3 5v10z" fill="#d5a084"/><path d="M252 720c1-9 8-13 14-9 5-5 11-3 14-1v10z" fill="#c3bfe6"/><path d="M254 720l6-8m0 8l3-7m4 7l-1-9m8 9l-2-8" stroke="#65598a" stroke-width="1.200"/></svg></div>
<div class="icons"><task-icon name="task" style="width:40.800px"></task-icon><task-icon name="mail" n="4"></task-icon><task-icon name="explorer" run></task-icon><task-icon name="telegram"></task-icon><task-icon name="store"></task-icon><task-icon name="bt"></task-icon><task-icon name="chromeA" run></task-icon><task-icon name="vs"></task-icon><task-icon name="wa" n="3"></task-icon><task-icon name="pbi" run sel></task-icon><task-icon name="word" run></task-icon><task-icon name="chromeB" run></task-icon><task-icon name="edge" run></task-icon></div>
<div class="wx"><span class="sun"></span>${t('23°C  Sunny',65)}</div>
<div class="tray">${ic('chevtray',12,8)}${ic('onedr',14)}${ic('wifi',14,13)}${ic('batt',14,10)}${ic('vol',15,13)}</div>${t('ENG',19,'style="margin-left:7px;font-size:10.300px"')}
<div class="clock">${t('3:31 PM',34.500)}${t('1/12/2024',45)}</div><div class="n">${ic('note',14)}<b>6</b></div><span class="end"></span>`);

define('activation-mark',`:host{position:absolute;left:1036px;top:616px;z-index:5;color:rgba(120,118,116,.55);display:flex;flex-direction:column;pointer-events:none}.a{font-size:16px;line-height:22px}.b{font-size:11.500px;line-height:17px}`,
`${t('Activate Windows',131,'class="a"')}${t('Go to Settings to activate Windows.',189,'class="b"')}`);

define('pbi-app',`:host{display:flex;flex-direction:column;width:1280px;height:720px;position:relative;overflow:hidden;background:#f3f2f1}.work{display:flex;height:532px}.mid{width:945px}.top{display:flex}`,
`<title-bar></title-bar><ribbon-tabs></ribbon-tabs><ribbon-bar></ribbon-bar><div class="work"><view-rail></view-rail><div class="mid"><div class="top"><report-canvas></report-canvas><filters-strip></filters-strip></div><page-tabs></page-tabs></div><viz-pane></viz-pane><fields-pane></fields-pane></div><status-bar></status-bar><task-bar></task-bar><activation-mark></activation-mark>`);
</script>
</body>
</html>
